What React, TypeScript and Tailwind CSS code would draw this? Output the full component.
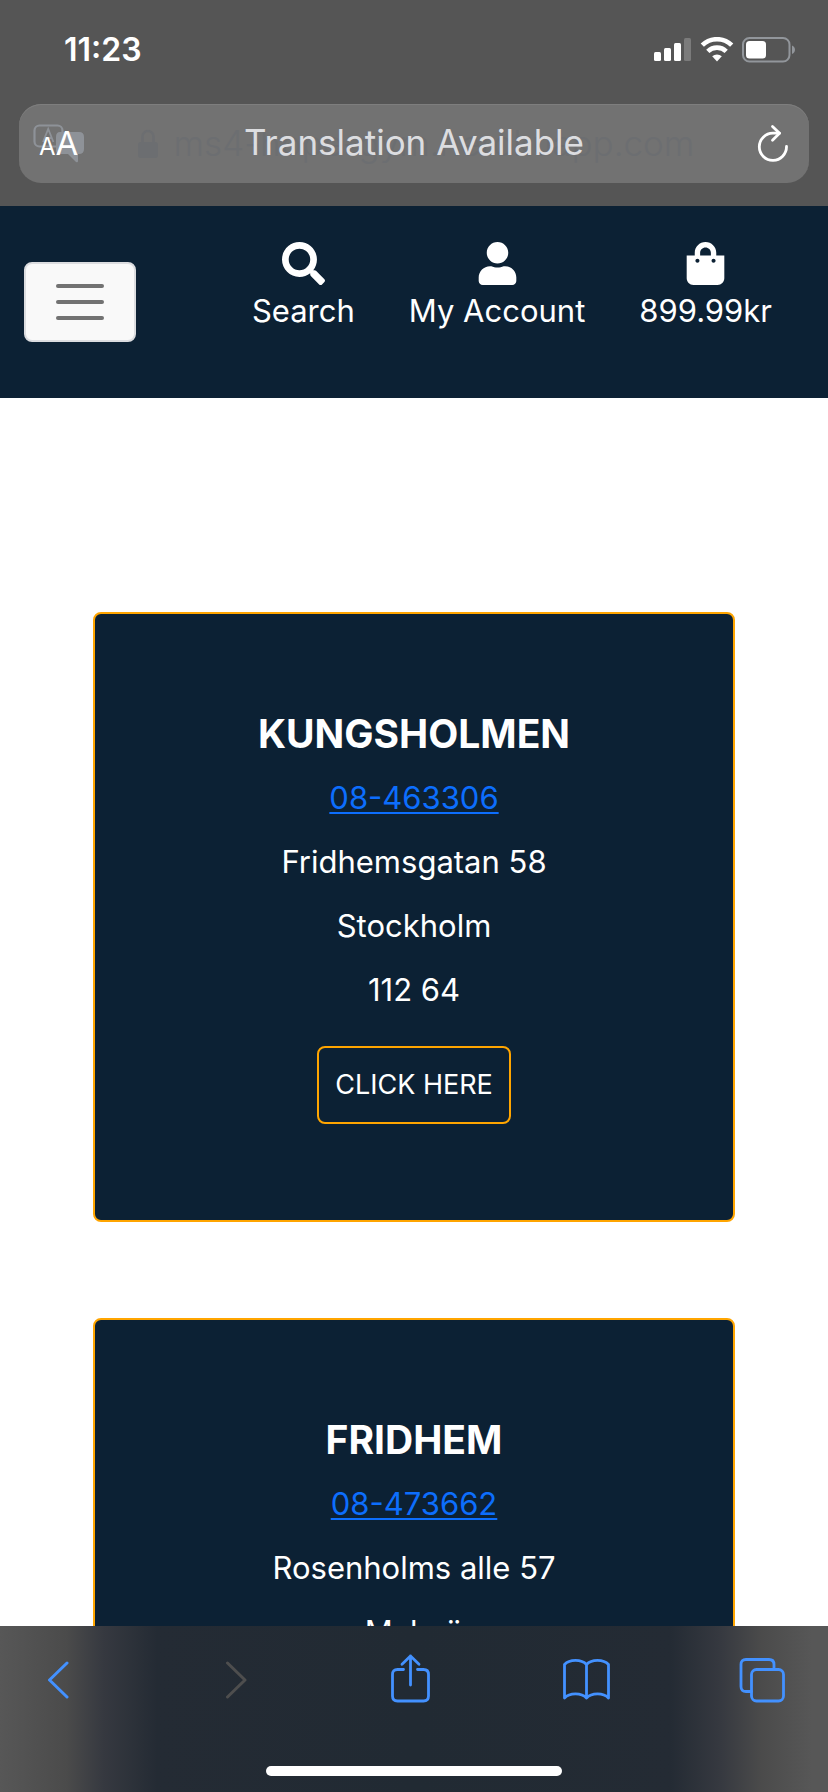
import React from "react";
import { FaSearch, FaShoppingBag, FaUser } from "react-icons/fa";

type Gym = { name: string; phone: string; street: string; city: string; zip: string };

const gyms: Gym[] = [
  { name: "KUNGSHOLMEN", phone: "08-463306", street: "Fridhemsgatan 58", city: "Stockholm", zip: "112 64" },
  { name: "FRIDHEM", phone: "08-473662", street: "Rosenholms alle 57", city: "Malmö", zip: "" },
];

function StatusBar() {
  return (
    <div className="flex h-[104px] items-center justify-between pr-8 pb-1 pl-16">
      <time className="text-[32px] leading-10 font-semibold">11:23</time>
      <div className="flex items-center gap-2">
        <svg width="38" height="26" viewBox="0 0 38 26" fill="#fff" aria-hidden="true">
          <rect x="0" y="15" width="7" height="9" rx="1.5" />
          <rect x="10" y="11" width="7" height="13" rx="1.5" />
          <rect x="20" y="6" width="7" height="18" rx="1.5" />
          <rect x="30" y="1" width="7" height="23" rx="1.5" fill="#7b7b7b" />
        </svg>
        <svg width="34" height="26" viewBox="0 0 34 26" aria-hidden="true">
          <g fill="none" stroke="#fff" strokeWidth="4.6">
            <path d="M2.300 8.200a21 21 0 0 1 29.400 0" />
            <path d="M7.800 14.400a13.200 13.200 0 0 1 18.400 0" />
          </g>
          <path d="M12.200 19.300a7.400 7.400 0 0 1 9.600 0L17 24.400z" fill="#fff" />
        </svg>
        <svg width="54" height="26" viewBox="0 0 54 26" aria-hidden="true">
          <rect x="1" y="1" width="46.5" height="23.5" rx="6.5" fill="none" stroke="#92969b" strokeWidth="2" />
          <rect x="4" y="4" width="20" height="17.5" rx="3.5" fill="#fff" />
          <path d="M50 8.500c4 1.500 4 7 0 8.500z" fill="#92969b" />
        </svg>
      </div>
    </div>
  );
}

function AddressBar() {
  return (
    <div className="relative mx-[19px] flex h-[79px] items-center rounded-[22px] bg-[#727272] px-[14px] pb-[2px] shadow-[inset_0_1px_0_#7e7e7e]">
      <button type="button" aria-label="Page settings" className="relative flex h-12 w-14 items-center">
        <svg className="absolute top-1 left-0" width="54" height="44" viewBox="0 0 54 44" aria-hidden="true">
          <rect x="1.500" y="2.500" width="28" height="21" rx="5" fill="none" stroke="#8e9298" strokeWidth="2.200" />
          <path d="M10 19l5.200-13 5.200 13M12 15h6.500" fill="none" stroke="#8e9298" strokeWidth="1.800" />
          <path d="M27 9h19q5 0 5 5v12q0 5-5 5h-1v7q0 2-2 1l-8-8h-8q-4 0-4-4V14q0-5 4-5z" fill="#8e9298" />
        </svg>
        <span className="relative flex items-baseline pt-1 pl-[6px] leading-[40px]">
          <span className="text-[24px]">A</span>
          <span className="text-[33px]">A</span>
        </span>
      </button>
      <div className="absolute inset-x-0 top-0 flex h-full items-center justify-center gap-4 pl-1 text-[#6c6e71]">
        <svg width="20" height="30" viewBox="0 0 20 30" aria-hidden="true">
          <path d="M4.500 13V7.500a5.500 5.500 0 0 1 11 0V13" fill="none" stroke="currentColor" strokeWidth="2.500" />
          <rect x="0" y="13" width="20" height="16" rx="3" fill="currentColor" />
        </svg>
        <span className="text-[35px] font-light">ms4-hope-gym.herokuapp.com</span>
      </div>
      <span className="relative flex-1 text-center text-[35px] text-[#dcdde0]">Translation Available</span>
      <button type="button" aria-label="Reload" className="relative flex h-12 w-14 items-center justify-end pr-1">
        <svg width="36" height="42" viewBox="0 0 36 42" fill="none" stroke="#fff" strokeWidth="2.800" strokeLinecap="round" strokeLinejoin="round" aria-hidden="true">
          <path d="M31.500 24.500A13.600 13.600 0 1 1 18 11.200q3.500 0 6.500 0" />
          <path d="M17.500 4.500l7 6.700-7 7" />
        </svg>
      </button>
    </div>
  );
}

const navLinks = [
  { label: "Search", Icon: FaSearch },
  { label: "My Account", Icon: FaUser },
  { label: "899.99kr", Icon: FaShoppingBag },
];

function SiteHeader() {
  return (
    <header className="flex h-48 shrink-0 items-start justify-between bg-[#0c2134] pr-14 pl-6">
      <button
        type="button"
        aria-label="Toggle navigation"
        className="mt-14 flex h-20 w-28 flex-col items-center justify-center gap-3 rounded-lg border-2 border-[#dcdde0] bg-[#f9f9f9]"
      >
        <span className="h-1 w-12 rounded-sm bg-[#727272]" />
        <span className="h-1 w-12 rounded-sm bg-[#727272]" />
        <span className="h-1 w-12 rounded-sm bg-[#727272]" />
      </button>
      <nav className="flex gap-[54px] pt-9">
        {navLinks.map(({ label, Icon }) => (
          <a key={label} href="#" className="flex flex-col items-center">
            <Icon className="h-[43px] w-auto" aria-hidden="true" />
            <span className="text-[31px] leading-[52px]">{label}</span>
          </a>
        ))}
      </nav>
    </header>
  );
}

function GymCard({ gym }: { gym: Gym }) {
  return (
    <article className="flex flex-col items-center rounded-lg border-2 border-[#ffa500] bg-[#0c2134] py-24 text-center text-[31px] leading-[48px]">
      <h2 className="mb-4 text-[39px] font-bold">{gym.name}</h2>
      <a href={`tel:${gym.phone}`} className="mb-4 text-[#0d6efd] underline decoration-2 underline-offset-3">
        {gym.phone}
      </a>
      <p className="mb-4">{gym.street}</p>
      <p className="mb-4">{gym.city}</p>
      {gym.zip && <p className="mb-4">{gym.zip}</p>}
      <button type="button" className="mt-4 h-[78px] rounded-lg border-2 border-[#ffa500] px-4 text-[27px]">
        CLICK HERE
      </button>
    </article>
  );
}

const iconProps = {
  fill: "none",
  stroke: "currentColor",
  strokeWidth: 3,
  strokeLinecap: "round" as const,
  strokeLinejoin: "round" as const,
  "aria-hidden": true,
};

function BrowserToolbar() {
  const button = "flex h-[52px] w-[60px] items-center justify-center";
  return (
    <footer className="flex h-[166px] shrink-0 flex-col items-center justify-between bg-[linear-gradient(90deg,#575757_0%,#4b4b4b_8%,#363940_12.500%,#242b34_19%,#212a33_50%,#242b34_81%,#363940_87%,#4b4b4b_92%,#575757_98%)] pt-7 pb-4">
      <div className="flex w-full justify-between pr-9 pl-7 text-[#4391ff]">
        <button type="button" aria-label="Back" className={button}>
          <svg width="22" height="40" viewBox="0 0 22 40" {...iconProps}>
            <path d="M20 3L2.500 20 20 37" />
          </svg>
        </button>
        <button type="button" aria-label="Forward" disabled className={`${button} text-[#4e4e4e]`}>
          <svg width="26" height="40" viewBox="0 0 26 40" {...iconProps}>
            <path d="M6.500 3L24 20 6.500 37" />
          </svg>
        </button>
        <button type="button" aria-label="Share" className={button}>
          <svg width="40" height="52" viewBox="0 0 40 52" {...iconProps} strokeWidth={2.8}>
            <path d="M13.500 15.500H7.500q-5 0-5 5V42q0 5 5 5h26q5 0 5-5V20.500q0-5-5-5h-6" />
            <path d="M20.500 31V2M12 10.200l8.500-8.200 8.500 8.200" />
          </svg>
        </button>
        <button type="button" aria-label="Bookmarks" className={button}>
          <svg width="48" height="44" viewBox="0 0 48 44" {...iconProps} strokeWidth={2.8}>
            <path d="M24.500 6.500C19.500 1 7.500 1 2.500 6.500V40c5-5.500 17-5.500 22 0 5-5.500 17-5.500 22 0V6.500C41.500 1 29.500 1 24.500 6.500zM24.500 6.500V40" />
          </svg>
        </button>
        <button type="button" aria-label="Tabs" className={button}>
          <svg width="46" height="46" viewBox="0 0 46 46" {...iconProps} strokeWidth={2.8}>
            <path d="M12.500 34.500H7q-5 0-5-5V7.500q0-5 5-5h23q5 0 5 5V12" />
            <rect x="12.500" y="12.500" width="32" height="31.500" rx="5" />
          </svg>
        </button>
      </div>
      <div className="h-[10px] w-[296px] rounded-full bg-white" />
    </footer>
  );
}

export default function App() {
  return (
    <div className="flex h-screen flex-col bg-white font-['Inter','Liberation_Sans',sans-serif] text-white">
      <div className="shrink-0 bg-[#555555] pb-[23px]">
        <StatusBar />
        <AddressBar />
      </div>
      <SiteHeader />
      <main className="flex min-h-0 flex-1 flex-col gap-24 overflow-y-auto px-[93px] pt-[214px] pb-24 [scrollbar-width:none]">
        {gyms.map((gym) => (
          <GymCard key={gym.name} gym={gym} />
        ))}
      </main>
      <BrowserToolbar />
    </div>
  );
}
